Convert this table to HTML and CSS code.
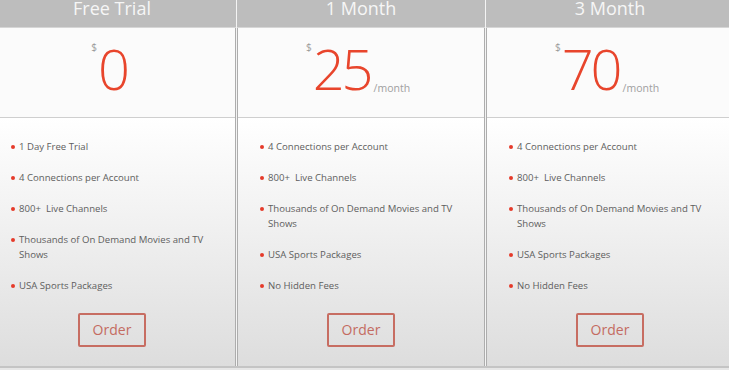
FILE: index.html
```html
<!DOCTYPE html>
<html>
<head>
<meta charset="utf-8">
<link rel="stylesheet" href="styles.css">
</head>
<body>
<div class="plans">
  <div class="plan">
    <div class="plan-head">Free Trial</div>
    <div class="plan-price"><span class="cur">$</span><span class="amount">0</span></div>
    <div class="plan-body">
      <ul class="features">
        <li>1 Day Free Trial</li>
        <li>4 Connections per Account</li>
        <li>800+&nbsp; Live Channels</li>
        <li>Thousands of On Demand Movies and TV Shows</li>
        <li>USA Sports Packages</li>
      </ul>
      <a class="order">Order</a>
    </div>
  </div>
  <div class="plan">
    <div class="plan-head">1 Month</div>
    <div class="plan-price"><span class="cur">$</span><span class="amount">25</span><span class="per">/month</span></div>
    <div class="plan-body">
      <ul class="features">
        <li>4 Connections per Account</li>
        <li>800+&nbsp; Live Channels</li>
        <li>Thousands of On Demand Movies and TV Shows</li>
        <li>USA Sports Packages</li>
        <li>No Hidden Fees</li>
      </ul>
      <a class="order">Order</a>
    </div>
  </div>
  <div class="plan">
    <div class="plan-head">3 Month</div>
    <div class="plan-price"><span class="cur">$</span><span class="amount">70</span><span class="per">/month</span></div>
    <div class="plan-body">
      <ul class="features">
        <li>4 Connections per Account</li>
        <li>800+&nbsp; Live Channels</li>
        <li>Thousands of On Demand Movies and TV Shows</li>
        <li>USA Sports Packages</li>
        <li>No Hidden Fees</li>
      </ul>
      <a class="order">Order</a>
    </div>
  </div>
</div>
</body>
</html>
```
FILE: styles.css
```css
html, body {
  margin: 0;
  padding: 0;
  background: #e6e6e6;
  overflow: hidden;
  font-family: "Open Sans", "Noto Sans", sans-serif;
}
.plans {
  display: flex;
  gap: 1px;
  margin-left: -12px;
  width: 760px;
  background: #f4f4f4;
  border-bottom: 2px solid #c4c4c4;
}
.plan {
  width: 246px;
  flex: none;
  display: flex;
  flex-direction: column;
  border-left: 1px solid #adadad;
  border-right: 1px solid #adadad;
  height: 366px;
}
.plan-head {
  height: 28px;
  box-sizing: border-box;
  background: #bdbdbd;
  color: #f6f6f6;
  font-size: 18px;
  line-height: 17px;
  text-align: center;
  margin: 0 -1px;
  padding: 0 1px;
  border-bottom: 1px solid #d6d6d6;
}
.plan-price {
  height: 90px;
  background: #fbfbfb;
  border-bottom: 1px solid #cfcfcf;
  display: flex;
  justify-content: center;
  align-items: flex-start;
  padding: 7px 6px 0 0;
  box-sizing: border-box;
}
.cur {
  font-size: 10px;
  color: #9a9a9a;
  margin-top: 5px;
  margin-right: 1px;
}
.amount {
  font-size: 56px;
  font-weight: 300;
  color: #e8452c;
  line-height: 66px;
  letter-spacing: -3px;
}
.per {
  font-size: 10.5px;
  color: #a0a0a0;
  align-self: flex-start;
  margin-top: 46px;
  margin-left: 3px;
}
.plan-body {
  flex: 1;
  background: linear-gradient(#ffffff 0%, #f0f0f0 45%, #dddddd 100%);
  display: flex;
  flex-direction: column;
  align-items: center;
}
.features {
  list-style: none;
  margin: 0;
  padding: 21px 20px 0 30px;
  align-self: stretch;
  font-size: 9.6px;
  line-height: 15px;
  color: #5e5e5e;
}
.features li {
  position: relative;
  margin-bottom: 16px;
}
.features li::before {
  content: "";
  position: absolute;
  left: -8px;
  top: 6px;
  width: 4px;
  height: 4px;
  border-radius: 50%;
  background: #e53a2a;
}
.order {
  margin-top: auto;
  margin-bottom: 19px;
  width: 68px;
  height: 34px;
  box-sizing: border-box;
  border: 2px solid #c76d62;
  border-radius: 2px;
  color: #c46b61;
  font-size: 14px;
  line-height: 30px;
  text-align: center;
}
```
